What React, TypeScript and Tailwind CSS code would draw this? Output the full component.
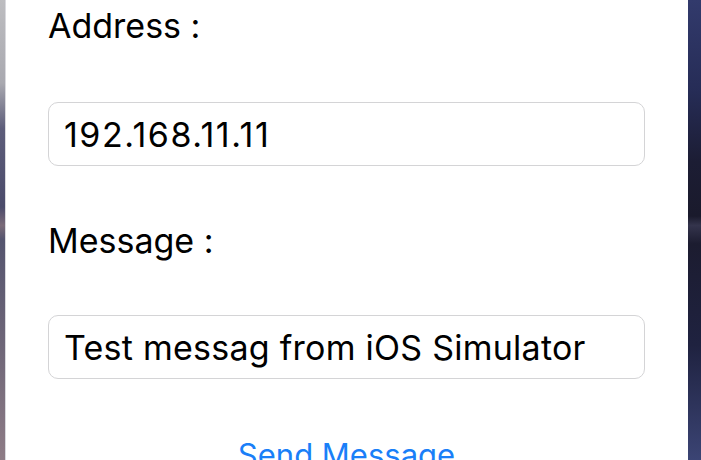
import { useState } from "react";

function Field({
  value,
  onChange,
  spacing,
}: {
  value: string;
  onChange: (v: string) => void;
  spacing: string;
}) {
  return (
    <input
      value={value}
      onChange={(e) => onChange(e.target.value)}
      className={`h-[64px] w-full rounded-[10px] border border-[#d4d4d6] bg-white px-[15px] text-[34px] text-black outline-none ${spacing}`}
    />
  );
}

export default function App() {
  const [address, setAddress] = useState("192.168.11.11");
  const [message, setMessage] = useState("Test messag from iOS Simulator");

  return (
    <div className="flex h-[460px] w-[701px] overflow-hidden font-['Inter','Helvetica_Neue',sans-serif]">
      <div className="w-[5px] shrink-0 bg-[linear-gradient(180deg,#bdbdc0_0%,#a9a9b0_18%,#5d5d7a_28%,#4b4b6b_45%,#7a6a78_49%,#55556f_52%,#6e6678_75%,#8e7c86_100%)]" />
      <div className="w-[1px] shrink-0 bg-[#d9d9de]" />
      <main className="flex w-[682px] shrink-0 flex-col bg-white pl-[42px] pr-[43px] pt-[6px]">
        <label className="text-[34px] leading-[40px] text-black">Address :</label>
        <div className="mt-[56px]">
          <Field value={address} onChange={setAddress} spacing="tracking-[1.5px]" />
        </div>
        <label className="mt-[55px] text-[34px] leading-[40px] text-black">Message :</label>
        <div className="mt-[54px]">
          <Field value={message} onChange={setMessage} spacing="tracking-[0.25px]" />
        </div>
        <button type="button" className="mt-[56px] self-center text-[31px] leading-[40px] text-[#1a7ff8]">
          Send Message
        </button>
      </main>
      <div className="flex-1 bg-[linear-gradient(180deg,#323a6c_0%,#262c56_20%,#1c1d34_35%,#1a1a2c_47%,#34344c_49%,#1c1c30_53%,#1f2240_75%,#3b4474_100%)]" />
    </div>
  );
}
